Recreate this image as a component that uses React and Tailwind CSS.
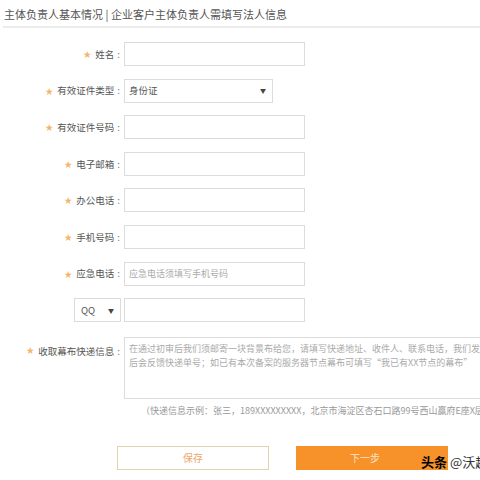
import React from "react";

const font = { fontFamily: '"Noto Sans CJK SC", "Noto Sans", sans-serif' };

const Star = () => <span className="text-[#f3b56a] text-[8px] mr-[4px]">★</span>;

const Row = ({ label, children, star = true }) => (
  <div className="flex items-center h-[24px]">
    <div className="w-[124px] shrink-0 flex justify-end items-center pr-[4px] text-[9.5px] text-[#555]">
      {star && <Star />}
      <span>{label}</span>
      <span className="ml-[3px] text-[#777]">:</span>
    </div>
    {children}
  </div>
);

const Input = ({ placeholder, w = "w-[181px]" }) => (
  <div className={`${w} h-[24px] border border-[#dcdcdc] bg-white flex items-center px-[4px] text-[9px] text-[#aaa]`}>
    {placeholder}
  </div>
);

export default function App() {
  return (
    <div className="w-[480px] h-[480px] bg-white overflow-hidden relative" style={font}>
      <div className="px-[4px] pt-[3px] text-[11px] text-[#555] h-[26px] flex items-center">
        主体负责人基本情况 | 企业客户主体负责人需填写法人信息
      </div>
      <div className="ml-[3px] h-[2px] bg-[#ececec]" />

      <div className="flex flex-col gap-[12.6px] mt-[14px]">
        <Row label="姓名">
          <Input />
        </Row>
        <Row label="有效证件类型">
          <div className="w-[149px] h-[24px] border border-[#dcdcdc] flex items-center justify-between px-[4px] text-[9.5px] text-[#555]">
            <span>身份证</span>
            <span className="text-[6px] text-[#444] mr-[2px]">▼</span>
          </div>
        </Row>
        <Row label="有效证件号码">
          <Input />
        </Row>
        <Row label="电子邮箱">
          <Input />
        </Row>
        <Row label="办公电话">
          <Input />
        </Row>
        <Row label="手机号码">
          <Input />
        </Row>
        <Row label="应急电话">
          <Input placeholder="应急电话须填写手机号码" />
        </Row>
        <div className="flex items-center h-[24px]">
          <div className="w-[124px] shrink-0 flex justify-end pr-[3px]">
            <div className="w-[47px] h-[24px] border border-[#dcdcdc] flex items-center justify-between px-[6px] text-[9.5px] text-[#555]">
              <span>QQ</span>
              <span className="text-[6px] text-[#444]">▼</span>
            </div>
          </div>
          <Input />
        </div>
      </div>

      <div className="flex mt-[15px]">
        <div className="w-[124px] shrink-0 flex justify-end items-start pt-[7px] pr-[4px] text-[9.5px] text-[#555]">
          <Star />
          <span>收取幕布快递信息</span>
          <span className="ml-[3px] text-[#777]">:</span>
        </div>
        <div className="w-[380px] shrink-0 h-[62px] border border-[#dcdcdc] px-[4px] pt-[4px] text-[9px] leading-[14px] text-[#aaa] whitespace-nowrap overflow-hidden">
          <div>在通过初审后我们须邮寄一块背景布给您，请填写快递地址、收件人、联系电话，我们发送</div>
          <div>后会反馈快递单号；如已有本次备案的服务器节点幕布可填写“我已有XX节点的幕布”</div>
        </div>
      </div>

      <div className="mt-[5px] pl-[141px] text-[9px] text-[#999] whitespace-nowrap">
        （快递信息示例：张三，189XXXXXXXXX，北京市海淀区杏石口路99号西山赢府E座X层X室）
      </div>

      <div className="flex mt-[28px] pl-[117px] gap-[27px]">
        <div className="w-[152px] h-[24px] border border-[#e3d3b0] flex items-center justify-center text-[10px] text-[#f0a56a]">
          保存
        </div>
        <div className="w-[152px] h-[24px] bg-[#f7922a] flex items-center justify-center pr-[14px] text-[10px] text-[#fde3c8]">
          下一步
        </div>
      </div>

      <div className="absolute left-[421px] top-[452px] flex items-center whitespace-nowrap text-[13px] leading-[20px]">
        <span className="font-bold text-black">头条</span>
        <span className="ml-[3px] text-[#333]">@沃趣科技</span>
      </div>
    </div>
  );
}
